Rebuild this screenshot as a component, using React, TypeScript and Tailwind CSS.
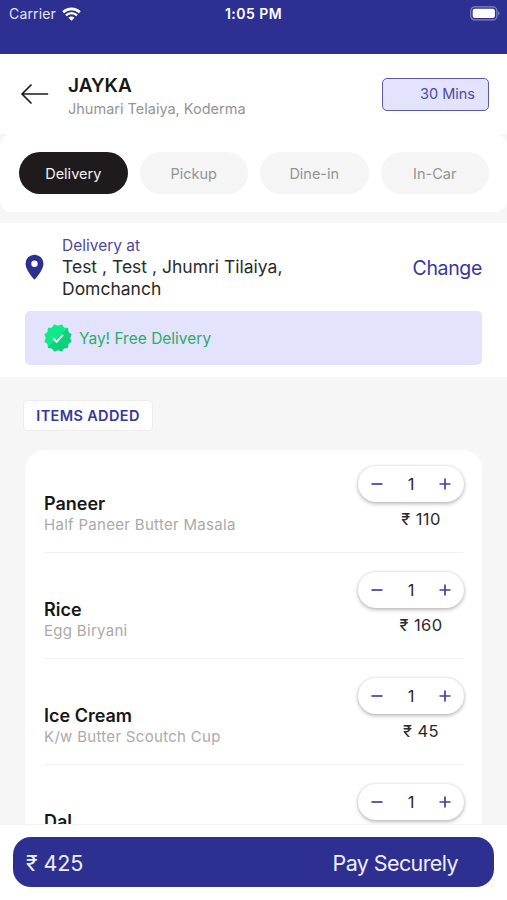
type Item = {
  name: string;
  detail?: string;
  price?: string;
  qty: number;
};

const MODES = ["Delivery", "Pickup", "Dine-in", "In-Car"];

const ITEMS: Item[] = [
  { name: "Paneer", detail: "Half Paneer Butter Masala", price: "110", qty: 1 },
  { name: "Rice", detail: "Egg Biryani", price: "160", qty: 1 },
  { name: "Ice Cream", detail: "K/w Butter Scoutch Cup", price: "45", qty: 1 },
  { name: "Dal", qty: 1 },
];

// Twelve-pointed seal outline, alternating outer and inner radius
const SEAL = Array.from({ length: 24 }, (_, i) => {
  const r = i % 2 === 0 ? 13.1 : 11.2;
  const a = (i * Math.PI) / 12 - Math.PI / 12;
  return `${(14 + r * Math.cos(a)).toFixed(2)},${(14 + r * Math.sin(a)).toFixed(2)}`;
}).join(" ");

function StatusBar() {
  return (
    <div className="h-[54px] shrink-0 bg-[#2e3091] text-white">
      <div className="grid h-[27px] grid-cols-3 items-center pr-[7px] pl-[9px]">
        <div className="flex items-center gap-[6px]">
          <span className="text-[14px] tracking-[0.15px] text-[#e4e4f6]">Carrier</span>
          <svg width="19" height="14" viewBox="0 0 19 14" fill="none" stroke="currentColor">
            <path d="M1.200 5.200a12 12 0 0 1 16.600 0" strokeWidth="2.600" />
            <path d="M4 8.300a7.900 7.900 0 0 1 11 0" strokeWidth="2.300" />
            <path d="M9.500 13.800 6.400 10.700a4.400 4.400 0 0 1 6.200 0z" fill="currentColor" stroke="none" />
          </svg>
        </div>
        <span className="-ml-[2px] text-center text-[14px] font-semibold tracking-[0.45px]">1:05 PM</span>
        <svg className="justify-self-end" width="30" height="15" viewBox="0 0 30 15">
          <rect x="0.7" y="0.9" width="26.2" height="13" rx="4" fill="none" stroke="#8384c4" strokeWidth="1.2" />
          <rect x="2.7" y="2.8" width="22.2" height="9.2" rx="2" fill="#fff" />
          <path d="M28.2 5.2v4.4q1.4-.7 1.4-2.2t-1.4-2.2z" fill="#8384c4" />
        </svg>
      </div>
    </div>
  );
}

function Header() {
  return (
    <div className="flex h-20 shrink-0 items-center bg-white pr-[18px] pl-[21px]">
      <svg width="28" height="20" viewBox="0 0 28 20" fill="none" stroke="#1c1c1e" strokeWidth="1.7" strokeLinecap="round" strokeLinejoin="round">
        <path d="M26.500 10H1M10 1 1 10l9 9" />
      </svg>
      <div className="ml-[19px] flex-1 pt-[5px]">
        <h1 className="text-[19px] leading-6 font-semibold text-[#171717]">JAYKA</h1>
        <p className="text-[14.5px] leading-[22px] text-[#949494]">Jhumari Telaiya, Koderma</p>
      </div>
      <div className="flex h-[33px] w-[107px] items-center justify-end rounded-[5px] border-[1.5px] border-[#5a5bac] bg-[#e3e3fd] pr-[13px] text-[14.5px] text-[#4b4ca3]">
        30 Mins
      </div>
    </div>
  );
}

function ModeTabs() {
  return (
    <div className="flex h-[78px] shrink-0 items-center justify-between rounded-[12px] bg-white pr-[18px] pl-[19px]">
      {MODES.map((mode, i) => (
        <button
          key={mode}
          className={`h-[42px] w-[108.5px] rounded-full pt-[2px] text-[14.5px] ${
            i === 0 ? "bg-[#1f1b1d] text-[#f2f2f2]" : "bg-[#f5f5f5] text-[#949494]"
          }`}
        >
          {mode}
        </button>
      ))}
    </div>
  );
}

function Address() {
  return (
    <div className="mt-[11px] h-[154px] shrink-0 bg-white px-[25px] pt-3">
      <div className="flex h-[76px]">
        <svg className="mt-[19px]" width="19" height="27" viewBox="0 0 19 27">
          <path fillRule="evenodd" fill="#2e3091" d="M9.5.7A9 9 0 0 0 .5 9.8c0 6.4 9 16 9 16s9-9.600 9-16A9 9 0 0 0 9.500.7zm0 5.900a3.200 3.200 0 1 1 0 6.400 3.200 3.200 0 0 1 0-6.400z" />
        </svg>
        <div className="ml-[18px] flex-1">
          <p className="text-[15.5px] leading-[21px] text-[#4a4aa3]">Delivery at</p>
          <p className="w-[240px] text-[17.5px] leading-[21.5px] text-[#2a2a2a]">
            Test , Test , Jhumri Tilaiya, Domchanch
          </p>
        </div>
        <button className="mt-[19px] h-[30px] text-[19.5px] tracking-[-0.35px] text-[#38399a]">Change</button>
      </div>
      <div className="flex h-[54px] items-center rounded-[5px] bg-[#e3e3fd] pl-[19px]">
        <svg width="28" height="28" viewBox="0 0 28 28">
          <defs>
            <linearGradient id="seal" x1="0" y1="0" x2="1" y2="1">
              <stop offset="0.5" stopColor="#0ee989" />
              <stop offset="0.5" stopColor="#10d07b" />
            </linearGradient>
          </defs>
          <polygon points={SEAL} fill="url(#seal)" stroke="url(#seal)" strokeWidth="1.8" strokeLinejoin="round" />
          <path d="m9.200 14.300 3.400 3.500 6.300-7" fill="none" stroke="#e8fff4" strokeWidth="2" />
        </svg>
        <span className="ml-[7px] pt-px text-[15.5px] text-[#2cab69]">Yay! Free Delivery</span>
      </div>
    </div>
  );
}

function Stepper({ qty }: { qty: number }) {
  return (
    <div className="flex h-[36px] w-[106px] items-center justify-between rounded-full bg-white px-[13px] shadow-[0_2px_4px_rgba(0,0,0,0.24),0_0_3px_rgba(0,0,0,0.14)]">
      <svg width="12" height="12" viewBox="0 0 12 12" stroke="#4142a0" strokeWidth="1.7">
        <path d="M.5 6h11" />
      </svg>
      <span className="text-[16.5px] text-[#2a2a2a]">{qty}</span>
      <svg width="12" height="12" viewBox="0 0 12 12" stroke="#4142a0" strokeWidth="1.7">
        <path d="M.5 6h11M6 .5v11" />
      </svg>
    </div>
  );
}

function ItemRow({ item }: { item: Item }) {
  return (
    <div className="flex h-[106px] shrink-0 justify-between">
      <div className="flex flex-1 flex-col border-b border-[#f1f1f1] pt-[46px]">
        <h3 className="text-[18px] leading-[22px] font-semibold text-[#171717]">{item.name}</h3>
        {item.detail && (
          <p className="text-[15px] leading-[20px] tracking-[0.3px] text-[#aaaaaa]">{item.detail}</p>
        )}
      </div>
      <div className="-mr-[2px] flex w-[107px] flex-col items-end">
        <div className="flex w-full flex-1 flex-col pt-[19px]">
          <Stepper qty={item.qty} />
          {item.price && (
            <p className="pt-[5px] pl-[19px] text-center text-[16.5px] leading-6 tracking-[0.45px] text-[#2a2a2a]">
              ₹ {item.price}
            </p>
          )}
        </div>
        <div className="mr-[2px] h-px w-[105px] bg-[#f1f1f1]" />
      </div>
    </div>
  );
}

export default function App() {
  return (
    <div className="flex h-[900px] w-[507px] flex-col overflow-hidden bg-[#f6f6f6] font-['Inter','Liberation_Sans',sans-serif]">
      <StatusBar />
      <Header />
      <ModeTabs />
      <Address />
      <div className="flex min-h-0 flex-1 flex-col items-start overflow-hidden pt-[23px]">
        <div className="ml-[23px] flex h-[31px] w-[130px] shrink-0 items-center justify-center rounded-[5px] border border-[#ececec] bg-white text-[14.5px] font-semibold tracking-[0.35px] text-[#37389a]">
          ITEMS ADDED
        </div>
        <div className="mt-[19px] ml-[25px] flex w-[457px] shrink-0 flex-col rounded-[20px] bg-white px-[19px]">
          <div className="-mt-[3px]">
            {ITEMS.map((item) => (
              <ItemRow key={item.name} item={item} />
            ))}
          </div>
        </div>
      </div>
      <div className="h-[76px] shrink-0 border-t border-[#f4f4f4] bg-white px-[13px] pt-3">
        <button className="flex h-[50px] w-full items-center justify-between rounded-[18px] bg-[#2e3091] pt-[2px] pr-[36px] pl-[13px] text-[21.5px] text-[#eeeefa]">
          <span className="tracking-[-0.1px]">₹ 425</span>
          <span className="tracking-[-0.6px]">Pay Securely</span>
        </button>
      </div>
    </div>
  );
}
